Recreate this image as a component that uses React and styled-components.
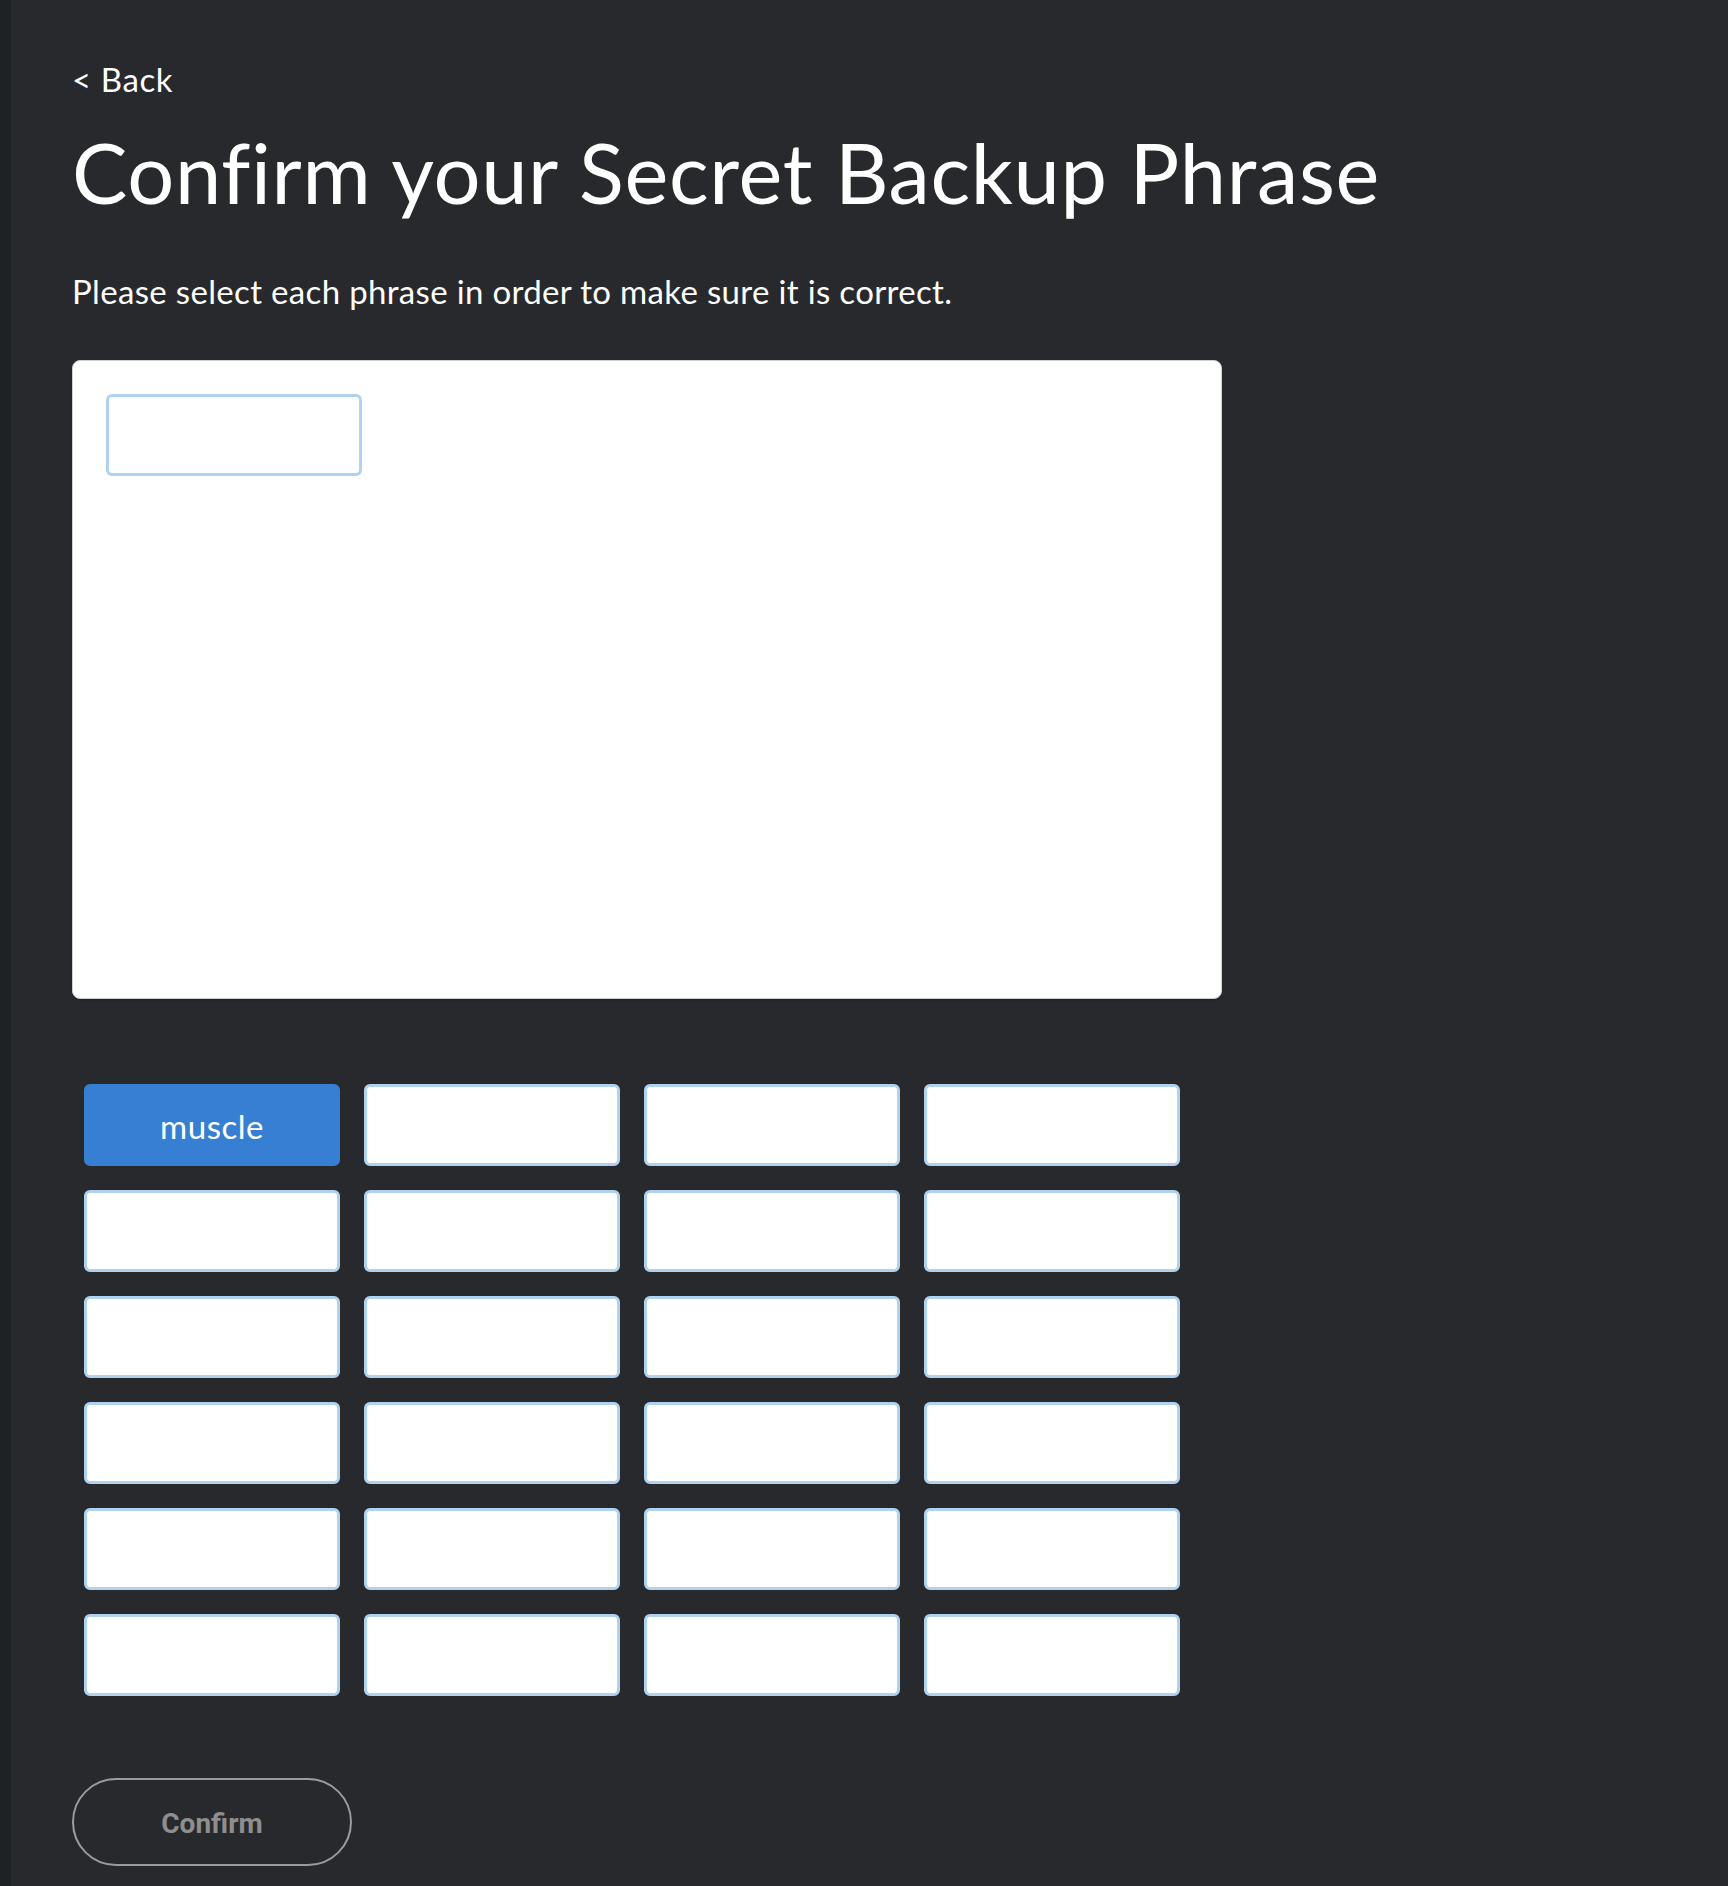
import React from 'react';
import styled, { createGlobalStyle } from 'styled-components';

const GlobalStyle = createGlobalStyle`
  html, body {
    margin: 0;
    padding: 0;
    background: #28292c;
  }
  body {
    font-family: Lato, 'Open Sans', sans-serif;
    -webkit-font-smoothing: antialiased;
  }
`;

const WORDS = ['muscle', ...Array(23).fill('')];

const App = () => {
  return (
    <>
      <GlobalStyle />
      <Page>
        <SideEdge />
        <Main>
          <BackLink>&lt; Back</BackLink>
          <Title>Confirm your Secret Backup Phrase</Title>
          <Subtitle>Please select each phrase in order to make sure it is correct.</Subtitle>
          <PhraseBox>
            <Slot />
          </PhraseBox>
          <WordGrid>
            {WORDS.map((word, i) => (
              <WordButton key={i} $selected={i === 0}>
                {word}
              </WordButton>
            ))}
          </WordGrid>
          <ConfirmButton disabled>Confirm</ConfirmButton>
        </Main>
      </Page>
    </>
  );
};

export default App;

const Page = styled.div`
  display: flex;
  min-height: 1886px;
`;

const SideEdge = styled.div`
  width: 11px;
  flex-shrink: 0;
  background: #1f2225;
`;

const Main = styled.main`
  flex: 1;
  display: flex;
  flex-direction: column;
  align-items: flex-start;
  padding: 60px 0 20px 61px;
  color: #ffffff;
`;

const BackLink = styled.div`
  font-size: 33px;
  line-height: 1.2;
  letter-spacing: 0.6px;
  cursor: pointer;
`;

const Title = styled.h1`
  margin: 23px 0 0;
  font-size: 83px;
  font-weight: 400;
  line-height: 1.2;
  letter-spacing: 0.65px;
`;

const Subtitle = styled.p`
  margin: 50px 0 0;
  font-size: 33px;
  line-height: 1.2;
  letter-spacing: 0.33px;
`;

const PhraseBox = styled.div`
  box-sizing: border-box;
  margin-top: 48px;
  width: 1150px;
  height: 639px;
  padding: 33px;
  background: #ffffff;
  border: 1px solid #cfcfcf;
  border-radius: 8px;
  box-shadow: 0 1px 2px rgba(0, 0, 0, 0.25);
`;

const Slot = styled.div`
  box-sizing: border-box;
  width: 256px;
  height: 82px;
  border: 3px solid #aed2ef;
  border-radius: 6px;
  background: #ffffff;
`;

const WordGrid = styled.div`
  margin-top: 85px;
  padding-left: 12px;
  display: grid;
  grid-template-columns: repeat(4, 256px);
  grid-auto-rows: 82px;
  gap: 24px;
`;

const WordButton = styled.div`
  box-sizing: border-box;
  display: flex;
  align-items: center;
  justify-content: center;
  border-radius: 6px;
  border: 3px solid ${({ $selected }) => ($selected ? '#367fd3' : '#aed2ef')};
  background: ${({ $selected }) => ($selected ? '#367fd3' : '#ffffff')};
  color: #ffffff;
  font-size: 33px;
  letter-spacing: 0.5px;
  padding-top: 2px;
  cursor: pointer;
`;

const ConfirmButton = styled.button`
  box-sizing: border-box;
  margin-top: 82px;
  width: 280px;
  height: 88px;
  padding-top: 4px;
  border: 2px solid #9b9b9b;
  border-radius: 44px;
  background: transparent;
  color: #8e8e8e;
  font-family: Roboto, 'Liberation Sans', sans-serif;
  font-size: 28px;
  font-weight: 700;
`;
